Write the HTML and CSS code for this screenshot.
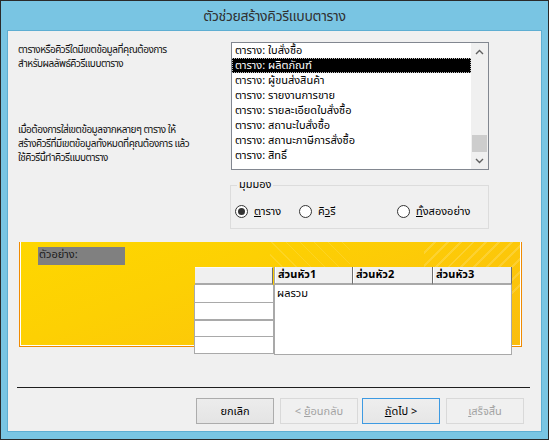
FILE: index.html
```html
<!DOCTYPE html>
<html lang="th">
<head>
<meta charset="utf-8">
<title>ตัวช่วยสร้างคิวรีแบบตาราง</title>
<link rel="stylesheet" href="styles.css">
</head>
<body>
<div class="window">
  <div class="titlebar">ตัวช่วยสร้างคิวรีแบบตาราง</div>
  <div class="client">
    <div class="top">
      <div class="help">
        <p class="help-1">ตารางหรือคิวรีใดมีเขตข้อมูลที่คุณต้องการ<br>สำหรับผลลัพธ์คิวรีแบบตาราง</p>
        <p class="help-2">เมื่อต้องการใส่เขตข้อมูลจากหลายๆ ตาราง ให้<br>สร้างคิวรีที่มีเขตข้อมูลทั้งหมดที่คุณต้องการ แล้ว<br>ใช้คิวรีนี้ทำคิวรีแบบตาราง</p>
      </div>
      <div class="pick">
        <div class="listbox">
          <ul class="items">
            <li class="item">ตาราง: ใบสั่งซื้อ</li>
            <li class="item sel">ตาราง: ผลิตภัณฑ์</li>
            <li class="item">ตาราง: ผู้ขนส่งสินค้า</li>
            <li class="item">ตาราง: รายงานการขาย</li>
            <li class="item">ตาราง: รายละเอียดใบสั่งซื้อ</li>
            <li class="item">ตาราง: สถานะใบสั่งซื้อ</li>
            <li class="item">ตาราง: สถานะภาษีการสั่งซื้อ</li>
            <li class="item">ตาราง: สิทธิ์</li>
          </ul>
          <div class="scrollbar">
            <div class="sb-btn">
              <svg width="9" height="6" viewBox="0 0 9 6"><polyline points="1,5 4.5,1.5 8,5" fill="none" stroke="#606060" stroke-width="1.4"/></svg>
            </div>
            <div class="sb-track"><div class="sb-thumb"></div></div>
            <div class="sb-btn">
              <svg width="9" height="6" viewBox="0 0 9 6"><polyline points="1,1 4.5,4.5 8,1" fill="none" stroke="#606060" stroke-width="1.4"/></svg>
            </div>
          </div>
        </div>
        <fieldset class="view">
          <legend class="view-title">มุมมอง</legend>
          <div class="radios">
            <div class="radio r1"><span class="dot on"></span><span><u>ต</u>าราง</span></div>
            <div class="radio r2"><span class="dot"></span><span>คิ<u>ว</u>รี</span></div>
            <div class="radio r3"><span class="dot"></span><span><u>ทั้</u>งสองอย่าง</span></div>
          </div>
        </fieldset>
      </div>
    </div>

    <div class="sample">
      <div class="sample-label">ตัวอย่าง:</div>
      <div class="grid">
        <div class="keys">
          <div class="khead"></div>
          <div class="krow"></div>
          <div class="krow thick"></div>
          <div class="krow short"></div>
          <div class="krow last"></div>
        </div>
        <div class="values">
          <div class="vhead">
            <div class="vcell c1">ส่วนหัว1</div>
            <div class="vcell c2">ส่วนหัว2</div>
            <div class="vcell c3">ส่วนหัว3</div>
          </div>
          <div class="vbody">ผลรวม</div>
        </div>
      </div>
    </div>

    <div class="rule"></div>

    <div class="buttons">
      <div class="btn cancel"><span>ยกเลิก</span></div>
      <div class="btn disabled back"><span>&lt; <u>ย้</u>อนกลับ</span></div>
      <div class="btn default next"><span><u>ถั</u>ดไป &gt;</span></div>
      <div class="btn disabled finish"><span><u>เ</u>สร็จสิ้น</span></div>
    </div>
  </div>
</div>
</body>
</html>
```

FILE: styles.css
```css
* { box-sizing: border-box; }

html, body {
  margin: 0;
  padding: 0;
}

body {
  width: 549px;
  height: 440px;
  overflow: hidden;
  font-family: Tahoma, "Leelawadee UI", "Noto Sans Thai", "Noto Sans Thai UI", Garuda, Loma, "DejaVu Sans", sans-serif;
  font-size: 11px;
  color: #000;
}

/* window frame */
.window {
  width: 549px;
  height: 440px;
  border: 1px solid #2a2a2a;
  background: #79c5e3;
  padding: 0 6px 7px;
  display: flex;
  flex-direction: column;
}

.titlebar {
  height: 29px;
  line-height: 31px;
  text-align: center;
  font-size: 14px;
  letter-spacing: -0.3px;
  color: #303030;
}

.client {
  flex: 1;
  border: 1px solid #5eaed2;
  background: #f0f0f0;
  display: flex;
  flex-direction: column;
}

/* upper area: help text + source list */
.top {
  display: flex;
  padding: 11px 0 0 10px;
}

.help {
  width: 213px;
  line-height: 14px;
  font-size: 10px;
  letter-spacing: -0.5px;
  color: #111;
}

.help p {
  margin: 0;
  white-space: nowrap;
}

.help .help-1 { padding-top: 1px; }
.help .help-2 { margin-top: 52px; }

.pick {
  width: 259px;
  display: flex;
  flex-direction: column;
}

.listbox {
  width: 258px;
  height: 128px;
  border: 1px solid #828790;
  background: #fff;
  display: flex;
}

.items {
  list-style: none;
  margin: 0;
  padding: 0;
  flex: 1;
}

.item {
  height: 15px;
  line-height: 15px;
  padding-left: 3px;
  white-space: nowrap;
}

.item.sel {
  background: #000;
  color: #fff;
  outline: 1px dotted #bdbdbd;
  outline-offset: -1px;
}

.scrollbar {
  width: 17px;
  background: #f0f0f0;
  display: flex;
  flex-direction: column;
}

.sb-btn {
  height: 17px;
  display: flex;
  align-items: center;
  justify-content: center;
}

.sb-track {
  flex: 1;
  display: flex;
  flex-direction: column;
  justify-content: flex-end;
}

.sb-thumb {
  height: 17px;
  margin: 0 1px;
  background: #cdcdcd;
}

/* view group */
.view {
  margin: 8px 0 0 -1px;
  width: 259px;
  min-width: 0;
  border: 1px solid #dcdcdc;
  padding: 12px 0 10px 0;
}

.view-title {
  margin-left: 6px;
  padding: 0 2px;
  line-height: 14px;
}

.radios {
  display: flex;
  align-items: center;
  height: 14px;
  padding-left: 4px;
}

.radio {
  display: flex;
  align-items: center;
  gap: 6px;
  white-space: nowrap;
}

.r1 { width: 64px; }
.r2 { width: 98px; }

.dot {
  width: 13px;
  height: 13px;
  border: 1px solid #333;
  border-radius: 50%;
  background: #fff;
  display: flex;
  align-items: center;
  justify-content: center;
}

.dot.on::after {
  content: "";
  width: 7px;
  height: 7px;
  border-radius: 50%;
  background: #333;
}

/* preview panel */
.sample {
  margin: 13px 0 0 11px;
  width: 503px;
  height: 105px;
  border: 1px solid #f08a00;
  border-top: 0;
  box-shadow: inset 1px 0 #fff, inset -1px 0 #fff, inset 0 -1px #fff;
  padding: 5px 0 0 18px;
  background:
    repeating-linear-gradient(135deg, rgba(255,255,255,0) 0 7px, rgba(255,255,255,0.16) 7px 9px) right 1px top / 96px 52px no-repeat,
    repeating-linear-gradient(45deg, rgba(255,255,255,0) 0 9px, rgba(255,255,255,0.12) 9px 10px) 250px 0 / 80px 26px no-repeat,
    linear-gradient(160deg, #fed700 0%, #fdd003 35%, #fcc60a 70%, #fabd0e 100%);
}

.sample-label {
  width: 87px;
  height: 18px;
  background: #808080;
  color: #1a1a1a;
  line-height: 16px;
  padding-left: 1px;
}

.grid {
  display: flex;
  margin: 2px 0 0 156px;
}

.keys {
  width: 80px;
}

.khead {
  height: 18px;
  margin: 0 1px;
  background: #f0f0f0;
  border-top: 1px solid #fafafa;
  border-right: 1px solid #6e6e6e;
  border-bottom: 2px solid #a9a9a9;
}

.krow {
  height: 18px;
  background: #fff;
  border: 1px solid #a9a9a9;
  border-top: 0;
}

.krow.thick { border-bottom-width: 2px; }
.krow.short { height: 16px; }
.krow.last { height: 17px; }

.values {
  width: 238px;
}

.vhead {
  display: flex;
  height: 18px;
}

.vcell {
  height: 18px;
  background: #f0f0f0;
  border-right: 1px solid #6e6e6e;
  border-bottom: 2px solid #a9a9a9;
  box-shadow: inset 1px 0 #fff;
  font-weight: bold;
  line-height: 16px;
  padding-left: 3px;
  white-space: nowrap;
}

.c1 { width: 79px; border-left: 1px solid #a9a9a9; }
.c2 { width: 80px; }
.c3 { width: 79px; }

.vbody {
  height: 70px;
  background: #fff;
  border: 1px solid #a9a9a9;
  border-top: 0;
  padding: 2px 2px;
  line-height: 14px;
}

/* footer */
.rule {
  height: 1px;
  background: #1e1e1e;
  margin: 40px 11px 0 9px;
}

.buttons {
  display: flex;
  justify-content: flex-end;
  margin-top: 10px;
  padding-right: 17px;
}

.btn {
  width: 78px;
  height: 26px;
  border: 1px solid #acacac;
  background: linear-gradient(#ececec, #e4e4e4);
  display: flex;
  align-items: center;
  justify-content: center;
  white-space: pre;
}

.btn.back { margin-left: 6px; }
.btn.next { margin-left: 4px; }
.btn.finish { margin-left: 6px; }

.btn.default {
  border-color: #3d9ae2;
  background: linear-gradient(#eeeeee, #e6e6e6);
}

.btn.disabled {
  border-color: #d9d9d9;
  background: #f0f0f0;
  color: #a3a3a3;
}
```
